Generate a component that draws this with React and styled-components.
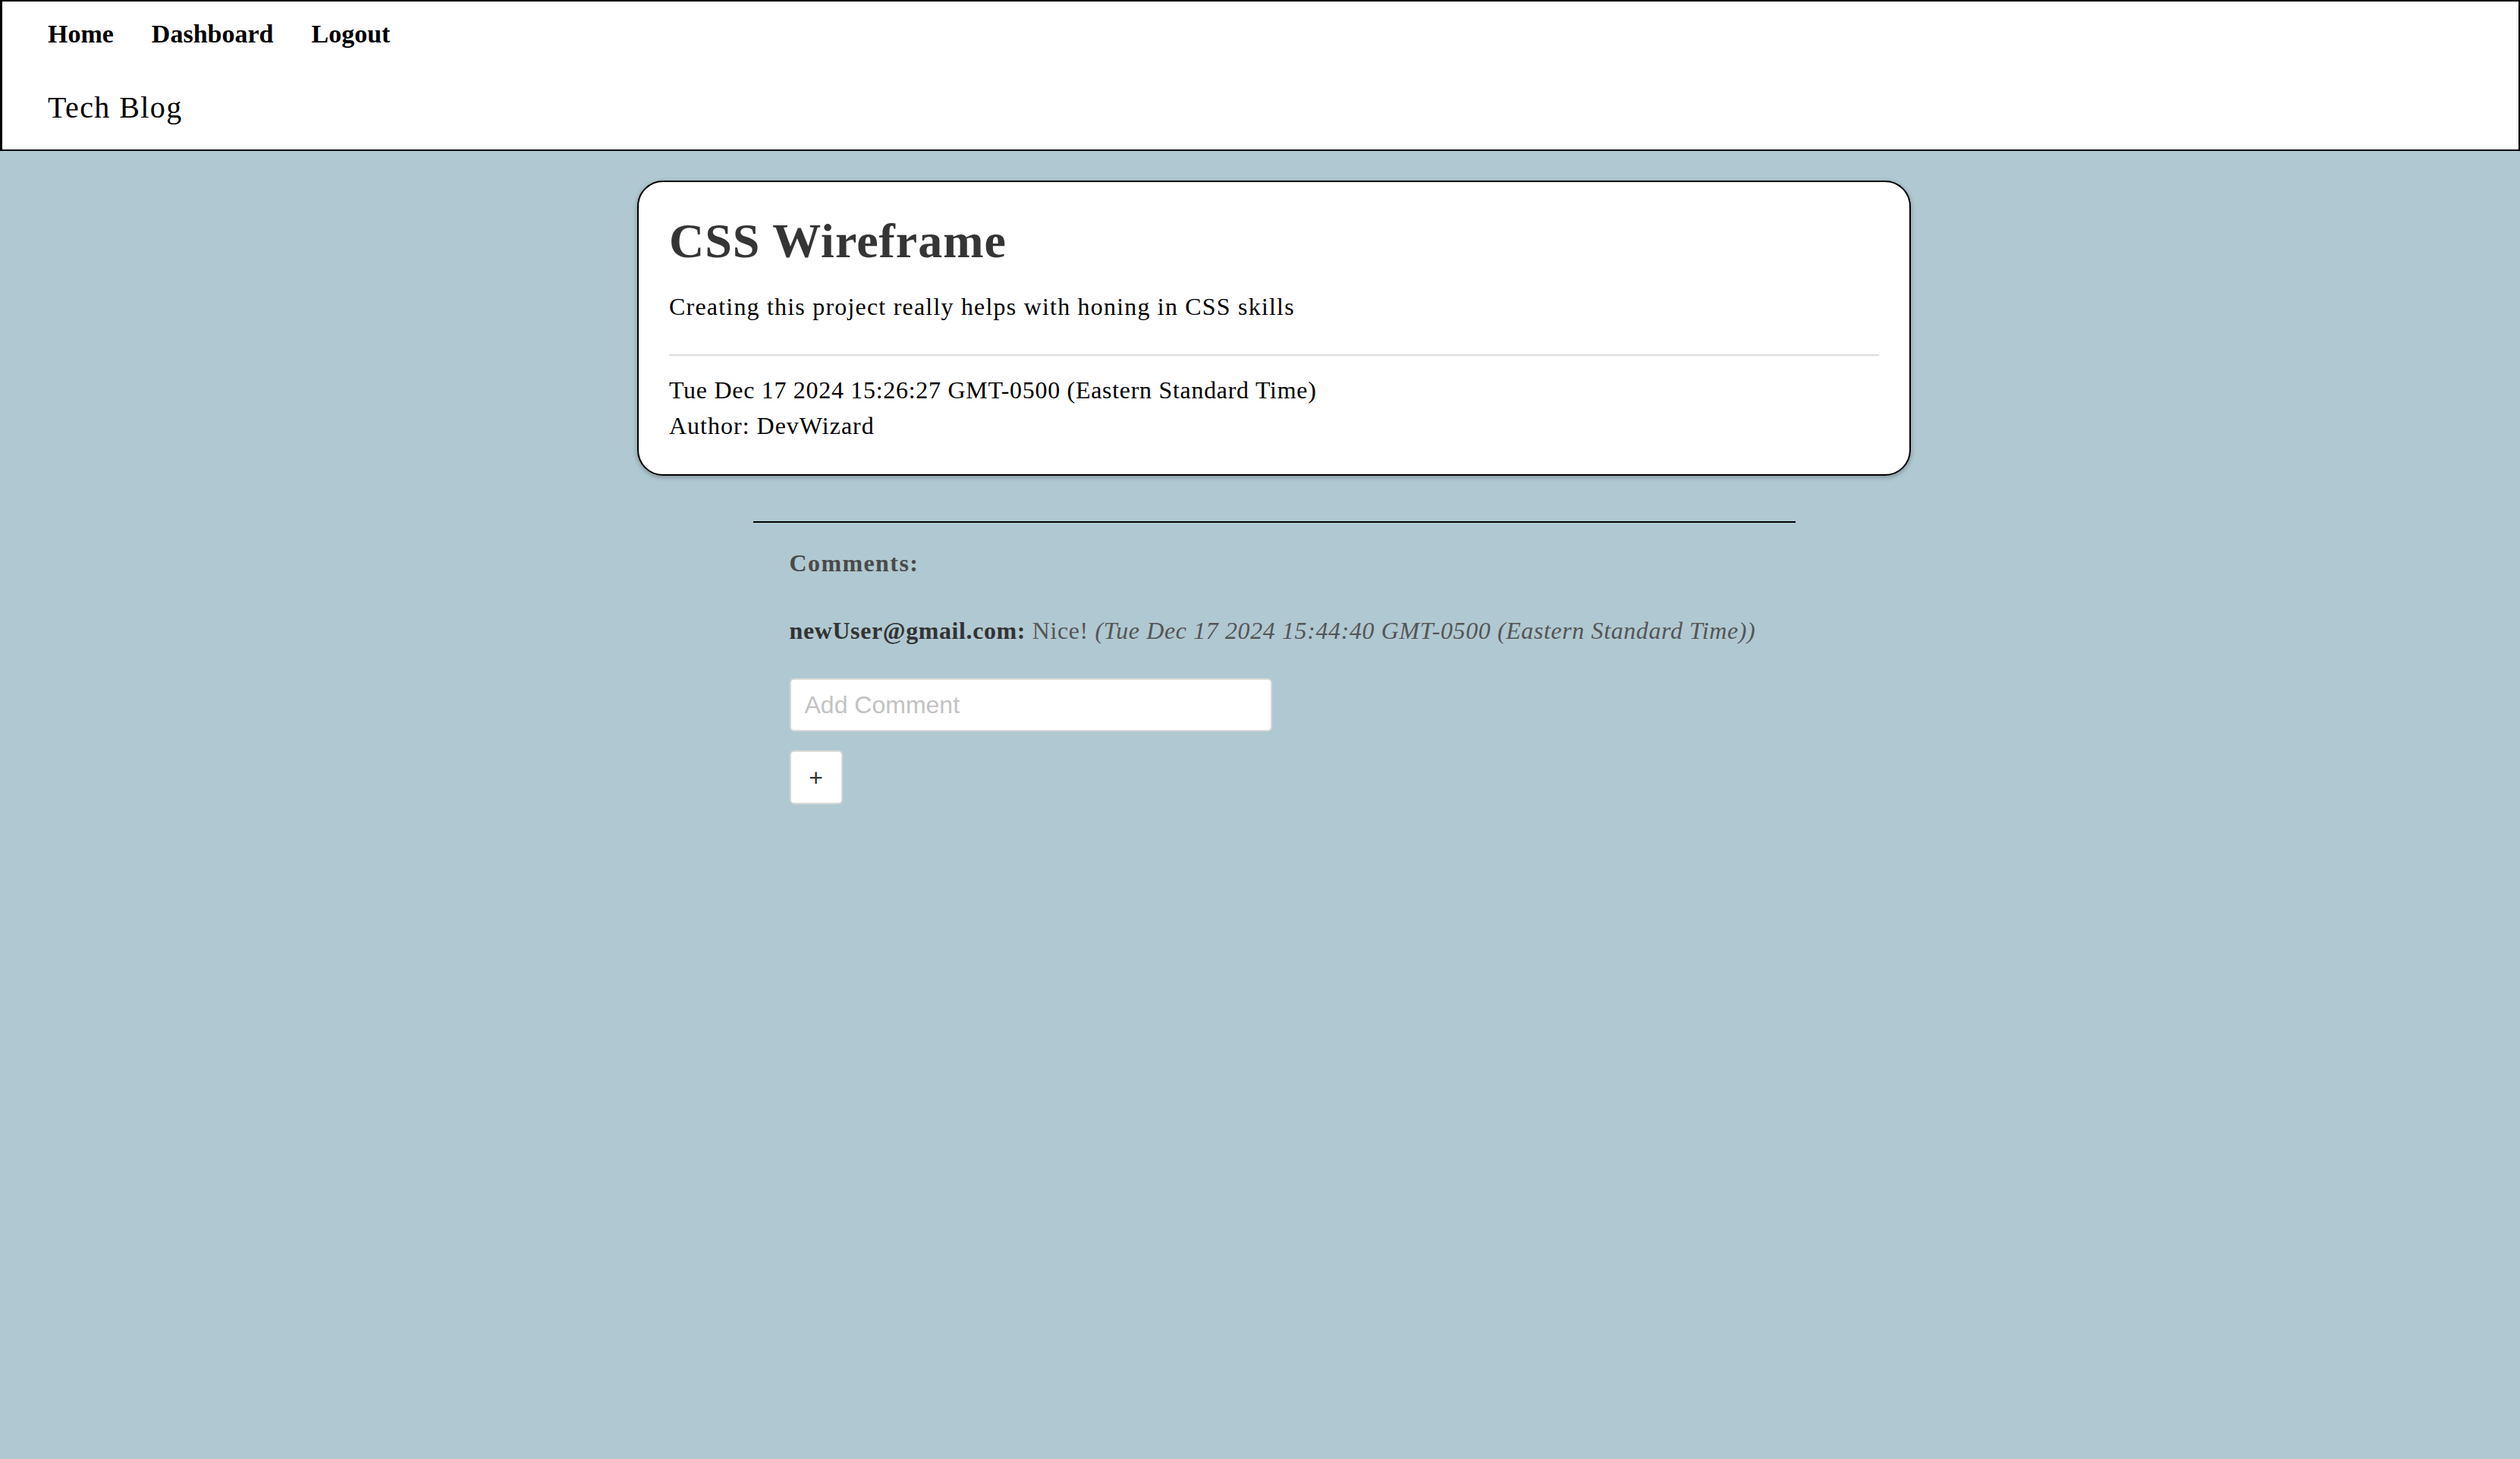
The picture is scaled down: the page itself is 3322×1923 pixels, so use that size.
import styled, { createGlobalStyle } from "styled-components";

const GlobalStyle = createGlobalStyle`
  html, body {
    margin: 0;
    padding: 0;
    background: #b0c8d2;
    min-height: 100vh;
  }
  body {
    font-family: 'Liberation Serif', 'Times New Roman', serif;
    color: #000;
  }
  * { box-sizing: border-box; }
`

const Header = styled.header`
  background: #fff;
  border: 2px solid #000;
  border-left-width: 3px;
  padding: 23px 60px 31px 60px;
`

const Nav = styled.nav`
  display: flex;
  gap: 50px;
  font-size: 34px;
  line-height: 40px;
  font-weight: 700;

  a {
    color: #000;
    text-decoration: none;
  }
`

const Brand = styled.div`
  margin-top: 53px;
  font-size: 40px;
  line-height: 48px;
  letter-spacing: 1.4px;
`

const Main = styled.main`
  display: flex;
  flex-direction: column;
  align-items: center;
  padding: 39px 0 80px 37px;
`

const Card = styled.article`
  width: 1679px;
  background: #fff;
  border: 2px solid #000;
  border-radius: 34px;
  box-shadow: 0 2px 6px rgba(0, 0, 0, 0.3);
  padding: 40px 40px;
`

const Title = styled.h1`
  margin: 0;
  font-size: 64px;
  line-height: 76px;
  font-weight: 700;
  letter-spacing: 1px;
  color: #353535;
`

const Text = styled.p`
  margin: ${(p) => p.$mt || 0}px 0 0 0;
  font-size: 32px;
  line-height: 47px;
  letter-spacing: ${(p) => p.$ls || 0.7}px;
`

const Divider = styled.hr`
  margin: 39px 0 22px 0;
  border: none;
  border-top: 2px solid #dcdcdc;
`

const Comments = styled.section`
  width: 1374px;
  margin-top: 60px;
  border-top: 2px solid #000;
  padding: 30px 48px 0 48px;
  color: #555;
`

const CommentsTitle = styled.h3`
  margin: 0;
  font-size: 32px;
  line-height: 47px;
  font-weight: 700;
  letter-spacing: 1.4px;
  color: #4a4a4a;
`

const CommentRow = styled.p`
  margin: 42px 0 0 0;
  font-size: 32px;
  line-height: 47px;
  letter-spacing: 0.6px;
  white-space: nowrap;

  strong { color: #333; }
  em { color: #555; }
`

const Form = styled.form`
  display: flex;
  flex-direction: column;
  align-items: flex-start;
  gap: 25px;
  margin-top: 39px;
`

const Input = styled.input`
  width: 636px;
  height: 70px;
  border: 2px solid #d9d9d9;
  border-radius: 6px;
  padding: 0 18px;
  font-family: 'Liberation Sans', Arial, sans-serif;
  font-size: 32px;
  color: #333;
  background: #fff;
  outline: none;

  &::placeholder { color: #c2c2c2; }
`

const AddButton = styled.button`
  width: 70px;
  height: 71px;
  border: 2px solid #d9d9d9;
  border-radius: 6px;
  background: #fff;
  font-family: 'Liberation Sans', Arial, sans-serif;
  font-size: 32px;
  color: #333;
  cursor: pointer;
  padding: 2px 0 0 0;
`

function App() {
  return (
    <>
      <GlobalStyle />
      <Header>
        <Nav>
          <a href="#">Home</a>
          <a href="#">Dashboard</a>
          <a href="#">Logout</a>
        </Nav>
        <Brand>Tech Blog</Brand>
      </Header>
      <Main>
        <Card>
          <Title>CSS Wireframe</Title>
          <Text $mt={25} $ls={1.2}>Creating this project really helps with honing in CSS skills</Text>
          <Divider />
          <Text>Tue Dec 17 2024 15:26:27 GMT-0500 (Eastern Standard Time)</Text>
          <Text $ls={1}>Author: DevWizard</Text>
        </Card>
        <Comments>
          <CommentsTitle>Comments:</CommentsTitle>
          <CommentRow>
            <strong>newUser@gmail.com:</strong> Nice! <em>(Tue Dec 17 2024 15:44:40 GMT-0500 (Eastern Standard Time))</em>
          </CommentRow>
          <Form onSubmit={(e) => e.preventDefault()}>
            <Input placeholder="Add Comment" />
            <AddButton type="submit">+</AddButton>
          </Form>
        </Comments>
      </Main>
    </>
  );
}

export default App;
